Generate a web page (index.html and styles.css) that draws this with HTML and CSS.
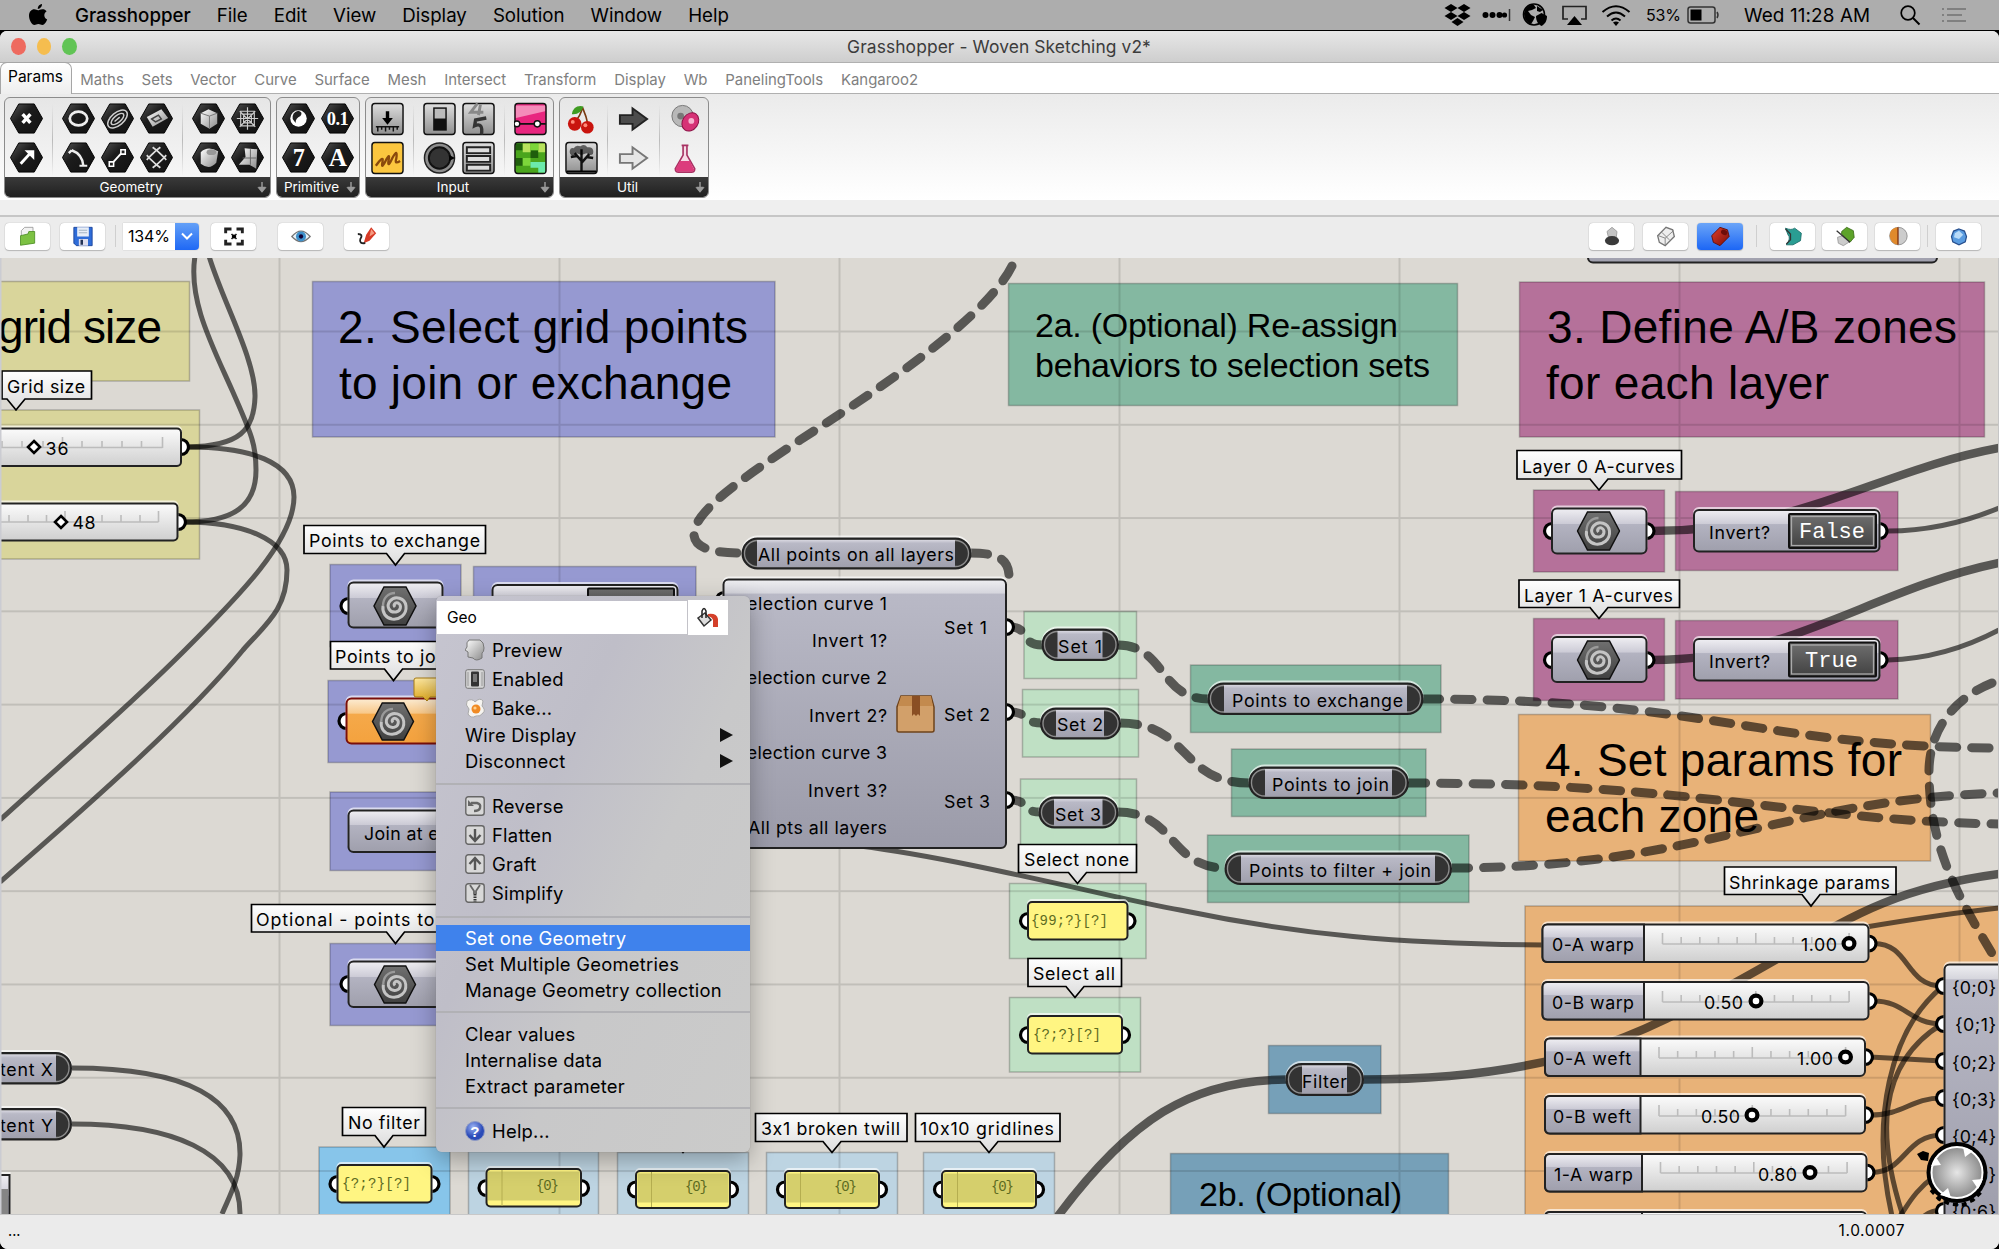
FILE: index.html
```html
<!DOCTYPE html>
<html lang="en">
<head>
<meta charset="utf-8">
<title>Grasshopper - Woven Sketching v2*</title>
<link rel="stylesheet" href="styles.css">
</head>
<body>
<svg class="defs" width="0" height="0" aria-hidden="true">
  <defs>
    <linearGradient id="gHex" x1="0" y1="0" x2="1" y2="1"><stop offset="0" stop-color="#555"/><stop offset=".4" stop-color="#1c1c1c"/><stop offset="1" stop-color="#111"/></linearGradient>
    <linearGradient id="gSquare" x1="0" y1="0" x2="0" y2="1"><stop offset="0" stop-color="#dedede"/><stop offset="1" stop-color="#8f8f8f"/></linearGradient>
    <linearGradient id="gSolid" x1="0" y1="0" x2="1" y2="1"><stop offset="0" stop-color="#fff"/><stop offset="1" stop-color="#8a8a8a"/></linearGradient>
    <linearGradient id="gNode" x1="0" y1="0" x2="0" y2="1"><stop offset="0" stop-color="#f0eff3"/><stop offset=".34" stop-color="#cccbd6"/><stop offset=".35" stop-color="#b3b3c1"/><stop offset="1" stop-color="#9f9fac"/></linearGradient>
    <linearGradient id="gRelay" x1="0" y1="0" x2="0" y2="1"><stop offset="0" stop-color="#d8d7e0"/><stop offset=".12" stop-color="#b9b9c6"/><stop offset="1" stop-color="#a0a0ad"/></linearGradient>
    <linearGradient id="gComponent" x1="0" y1="0" x2="0" y2="1"><stop offset="0" stop-color="#efeff2"/><stop offset=".05" stop-color="#d6d6dd"/><stop offset=".055" stop-color="#b9b9c6"/><stop offset="1" stop-color="#9b9ba9"/></linearGradient>
    <linearGradient id="gOrange" x1="0" y1="0" x2="0" y2="1"><stop offset="0" stop-color="#fcecd4"/><stop offset=".33" stop-color="#f8c888"/><stop offset=".34" stop-color="#f5a94a"/><stop offset="1" stop-color="#f4a23e"/></linearGradient>
    <linearGradient id="gTrack" x1="0" y1="0" x2="0" y2="1"><stop offset="0" stop-color="#fbfbfb"/><stop offset="1" stop-color="#cfcfcf"/></linearGradient>
    <linearGradient id="gTag" x1="0" y1="0" x2="0" y2="1"><stop offset="0" stop-color="#fff"/><stop offset="1" stop-color="#dcdcdc"/></linearGradient>
    <linearGradient id="gDark" x1="0" y1="0" x2="0" y2="1"><stop offset="0" stop-color="#707070"/><stop offset="1" stop-color="#404040"/></linearGradient>
    <linearGradient id="gBubble" x1="0" y1="0" x2="0" y2="1"><stop offset="0" stop-color="#ffe9a0"/><stop offset="1" stop-color="#e0aa20"/></linearGradient>
    <linearGradient id="gRed" x1="0" y1="0" x2="1" y2="1"><stop offset="0" stop-color="#e0402c"/><stop offset="1" stop-color="#7c0c08"/></linearGradient>
    <radialGradient id="gCompass"><stop offset="0" stop-color="#e6e6e6"/><stop offset="1" stop-color="#8c8c8c"/></radialGradient>
    <radialGradient id="gHelp" cx=".4" cy=".3"><stop offset="0" stop-color="#9db4f4"/><stop offset="1" stop-color="#2b4bb8"/></radialGradient>
    <pattern id="grid" x="278.500" y="330.500" width="280" height="93.280" patternUnits="userSpaceOnUse">
      <path d="M1 0V94M0 1H280" stroke="#000" stroke-opacity=".12" stroke-width="2"/>
    </pattern>
    <symbol id="hex" viewBox="0 0 34 34"><path d="M9 1.500H25L33.500 16.500L25 31.500H9L.5 16.500Z" fill="url(#gHex)" stroke="#000" stroke-width="1"/></symbol>
    <symbol id="spiral" viewBox="0 0 44 40">
      <path d="M11 1H33L43 20L33 39H11L1 20Z" fill="url(#gDark)" stroke="#111" stroke-width="1.500"/>
      <path d="M22 21C20 19 22 16 25 17C29 19 28 25 23 26C16 27 13 20 17 15C22 9 32 12 33 20C34 29 26 34 19 33C13 32 9 27 10 20" fill="none" stroke="#c4c4c4" stroke-width="3"/>
      <path d="M10 20C10 12 15 7 22 7" fill="none" stroke="#9a9a9a" stroke-width="2.400"/>
    </symbol>
    <symbol id="ticks" viewBox="0 0 190 14" overflow="visible">
      <path d="M0 13H186.600M0 2V13M18.660 6V13M37.320 6V13M55.980 6V13M74.640 6V13M93.300 2V13M111.960 6V13M130.620 6V13M149.280 6V13M167.940 6V13M186.600 2V13" fill="none" stroke="#bcbcbc" stroke-width="1.600"/>
    </symbol>
  </defs>
</svg>

<header class="menubar">
  <svg class="apple" width="20" height="24" viewBox="0 0 20 24"><path d="M14 1C14.200 3.500 12 6 9.800 5.900C9.500 3.500 11.800 1.200 14 1ZM10 7.300C11 7.300 12.500 6 14.800 6.200C16 6.200 17.700 6.800 18.600 8.300C15.200 10.500 15.800 15.200 19.200 16.500C18.400 18.700 16.500 22 14.400 22C12.800 22 12.300 21 10.400 21C8.400 21 8 22 6.400 22C4 22 1 16.800 1 12.700C1 8.500 3.700 6.300 6.200 6.300C7.900 6.300 9.200 7.300 10 7.300Z"/></svg>
  <nav class="menus"><b>Grasshopper</b><span>File</span><span>Edit</span><span>View</span><span>Display</span><span>Solution</span><span>Window</span><span>Help</span></nav>
  <div class="tray">
    <svg width="27" height="24" viewBox="0 0 27 24"><path d="M7 1L13.500 5L7 9L.5 5ZM20 1L26.500 5L20 9L13.500 5ZM7 9L13.500 13L7 17L.5 13ZM20 9L26.500 13L20 17L13.500 13ZM13.500 15L19.500 19L13.500 23L7.500 19Z"/></svg>
    <svg class="t-dots" width="29" height="14" viewBox="0 0 29 14"><circle cx="3.500" cy="7" r="3"/><circle cx="10.500" cy="7" r="3"/><circle cx="17.500" cy="7" r="3"/><circle cx="22.500" cy="7" r="2.600"/><path d="M27.500 1V13" stroke="#333" stroke-width="1.500"/></svg>
    <svg class="t-globe" width="26" height="24" viewBox="0 0 26 24"><circle cx="12" cy="11.500" r="10.500" fill="none" stroke="#000" stroke-width="1.600"/><path d="M2 10C4 3 9 1 12 2L14 5L10 7L6 8L9 12L13 14L11 18L9 21C4 19 2 15 2 10ZM15 3L21 7L18 9L15 8Z"/><path d="M19.500 10L25 13C25 18 23 21 19.500 23C16 21 14 18 14 13Z"/></svg>
    <svg class="t-airplay" width="27" height="21" viewBox="0 0 27 21"><path d="M7 14H2V1.500H25V14H20" fill="none" stroke="#222" stroke-width="1.700"/><path d="M13.500 11L21 20H6Z"/></svg>
    <svg class="t-wifi" width="30" height="21" viewBox="0 0 30 21"><g fill="none" stroke="#000" stroke-width="2"><path d="M1.500 7Q15-4.500 28.500 7M6 11.500Q15 3.500 24 11.500M10.500 15.500Q15 11.500 19.500 15.500"/></g><path d="M12 17.500Q15 15.500 18 17.500L15 21Z"/></svg>
    <span class="pct">53%</span>
    <svg class="t-batt" width="33" height="18" viewBox="0 0 33 18"><rect x="1" y="1" width="27" height="16" rx="2.500" fill="none" stroke="#333" stroke-width="1.500"/><rect x="3.500" y="3.500" width="11" height="11"/><path d="M30 6Q32 9 30 12" stroke="#333" stroke-width="1.500" fill="none"/></svg>
    <span class="clock">Wed 11:28 AM</span>
    <svg class="t-find" width="21" height="21" viewBox="0 0 21 21"><circle cx="8" cy="8" r="6.800" fill="none" stroke="#000" stroke-width="1.700"/><path d="M13 13L19.500 19.500" stroke="#000" stroke-width="2"/></svg>
    <svg class="t-list" width="26" height="16" viewBox="0 0 26 16"><path d="M1 2H3M6 2H25M1 8H3M6 8H21M1 14H3M6 14H25" stroke="#808080" stroke-width="2.200"/></svg>
  </div>
</header>

<main class="window">
  <div class="titlebar"><div class="lights"><i></i><i></i><i></i></div><h1>Grasshopper - Woven Sketching v2*</h1></div>
  <nav class="tabs"><span class="active">Params</span><span>Maths</span><span>Sets</span><span>Vector</span><span>Curve</span><span>Surface</span><span>Mesh</span><span>Intersect</span><span>Transform</span><span>Display</span><span>Wb</span><span>PanelingTools</span><span>Kangaroo2</span></nav>

  <section class="ribbon">
    <div class="panel p-geo">
      <div class="tools">
        <div class="cols c1">
          <svg viewBox="0 0 34 34"><use href="#hex"/><path d="M13 12L21 21M21 12L13 21" stroke="#fff" stroke-width="3.500"/></svg>
          <svg viewBox="0 0 34 34"><use href="#hex"/><path d="M11 23L20 13" stroke="#fff" stroke-width="3"/><path d="M15 9H25V19Z" fill="#fff"/></svg>
        </div><hr>
        <div class="cols c3">
          <svg viewBox="0 0 34 34"><use href="#hex"/><ellipse cx="17" cy="16.500" rx="9" ry="7" fill="none" stroke="#eee" stroke-width="2.800"/></svg>
          <svg viewBox="0 0 34 34"><use href="#hex"/><g fill="none" stroke="#ccc" stroke-width="1.500" transform="rotate(-40 17 17)"><ellipse cx="17" cy="17" rx="12" ry="6.500"/><ellipse cx="17" cy="17" rx="8" ry="3.500"/><path d="M13 17H20"/></g></svg>
          <svg viewBox="0 0 34 34"><use href="#hex"/><path d="M7 15L22 7L29 16L13 25Z" fill="url(#gSolid)"/><path d="M12 17L19 13L22 17L16 20Z" fill="none" stroke="#444" stroke-width="1.500"/></svg>
          <svg viewBox="0 0 34 34"><use href="#hex"/><path d="M10 9Q21 13 22 25M10 9L7 12" fill="none" stroke="#eee" stroke-width="2.500"/><path d="M18 25H26" stroke="#eee" stroke-width="2"/></svg>
          <svg viewBox="0 0 34 34"><use href="#hex"/><path d="M11 23L22 11" stroke="#fff" stroke-width="2"/><path d="M8.500 21H13V25.500H8.500ZM20.500 8.500H25V13H20.500Z" fill="#222" stroke="#fff" stroke-width="1.600"/></svg>
          <svg viewBox="0 0 34 34"><use href="#hex"/><path d="M17 9L25 16.500L17 24L9 16.500ZM13 6L17 9L21 6M7 14L9 16.500L7 19M27 14L25 16.500L27 19M13 27L17 24L21 27" fill="none" stroke="#ddd" stroke-width="1.800"/></svg>
        </div><hr>
        <div class="cols c2">
          <svg viewBox="0 0 34 34"><use href="#hex"/><path d="M9 11L17 7L26 11V22L18 27L9 22Z" fill="url(#gSolid)"/><path d="M9 11L18 14L26 11M18 14V27" fill="none" stroke="#777"/></svg>
          <svg viewBox="0 0 34 34"><use href="#hex"/><path d="M10 9H24V24H10ZM17 5V28M6 16.500H28M9 9L25 25M25 9L9 25M13 12H21V21H13Z" fill="none" stroke="#ccc" stroke-width="1.200"/></svg>
          <svg viewBox="0 0 34 34"><use href="#hex"/><path d="M9 11Q16 4 27 10L25 22Q18 30 9 23Z" fill="url(#gSolid)"/><ellipse cx="20" cy="11" rx="5" ry="3" fill="#999"/></svg>
          <svg viewBox="0 0 34 34"><use href="#hex"/><path d="M14 7L27 8L26 28L19 24L8 24L15 16Z" fill="url(#gSolid)"/><path d="M20 8V24M12 17L26 17" stroke="#666"/></svg>
        </div>
      </div>
      <footer><span>Geometry</span><svg class="pin" viewBox="0 0 10 12"><path d="M5 1V10M2 7L5 10.500L8 7ZM1.500 6.500H8.500" fill="#999" stroke="#999" stroke-width="1.500"/></svg></footer>
    </div>
    <div class="panel p-prim">
      <div class="tools"><div class="cols c2">
        <svg viewBox="0 0 34 34"><use href="#hex"/><circle cx="17" cy="16.500" r="8.500" fill="#fff"/><path d="M11 17Q10 10 17 8.500Q22 10 19 14Q14 16 14 21Z" fill="#222"/></svg>
        <svg viewBox="0 0 34 34"><use href="#hex"/><text class="glyph" x="17" y="23" font-size="19">0.1</text></svg>
        <svg viewBox="0 0 34 34"><use href="#hex"/><text class="glyph" x="17" y="25" font-size="25">7</text></svg>
        <svg viewBox="0 0 34 34"><use href="#hex"/><text class="glyph" x="17" y="25" font-size="26">A</text></svg>
      </div></div>
      <footer><span>Primitive</span><svg class="pin" viewBox="0 0 10 12"><path d="M5 1V10M2 7L5 10.500L8 7ZM1.500 6.500H8.500" fill="#999" stroke="#999" stroke-width="1.500"/></svg></footer>
    </div>
    <div class="panel p-input">
      <div class="tools">
        <div class="cols c1">
          <svg viewBox="0 0 34 34"><rect class="sq" x="1" y="1" width="32" height="32" rx="3"/><path d="M17 9V17" stroke="#000" stroke-width="3.500"/><path d="M11.500 16H22.500L17 23Z"/><path d="M5 25H29M7 25V30M11 25V28M15 25V30M19 25V28M23 25V30M27 25V28" stroke="#111" stroke-width="1.500"/></svg>
          <svg viewBox="0 0 34 34"><rect x="1" y="1" width="32" height="32" rx="3" fill="#fbc63f" stroke="#111" stroke-width="1.500"/><path d="M5 25Q13 14 12 20Q10 30 15 20Q20 10 18 20Q17 28 22 17Q28 6 26 18Q24 24 30 20" fill="none" stroke="#8a4a0c" stroke-width="2.400"/></svg>
        </div><hr>
        <div class="cols c2">
          <svg viewBox="0 0 34 34"><rect class="sq" x="1" y="1" width="32" height="32" rx="3"/><rect x="10.500" y="5" width="14" height="24" fill="#111"/><rect x="12" y="6.500" width="11" height="10" fill="#bbb"/></svg>
          <svg viewBox="0 0 34 34"><rect class="sq" x="1" y="1" width="32" height="32" rx="3"/><path d="M16 1L9 10H22M19 2L17 13" fill="none" stroke="#888" stroke-width="3"/><path d="M25 16L14 18L13 24Q22 20 20 33" fill="none" stroke="#333" stroke-width="3.500"/></svg>
          <svg viewBox="0 0 34 34"><circle cx="17" cy="17" r="15.500" fill="#8d8d8d" stroke="#222" stroke-width="1.500"/><circle cx="17" cy="17" r="11" fill="#333" stroke="#111" stroke-width="2"/><path d="M27 14L33 17L27 20Z"/></svg>
          <svg viewBox="0 0 34 34"><rect class="sq" x="1" y="1" width="32" height="32" rx="3"/><path d="M5 6H29V12H5ZM5 15H29V21H5ZM5 24H29V30H5Z" fill="#ddd" stroke="#222" stroke-width="2"/></svg>
        </div><hr>
        <div class="cols c1">
          <svg viewBox="0 0 34 34"><rect x="1" y="1" width="32" height="32" rx="3" fill="#e8267f" stroke="#111" stroke-width="1.500"/><path d="M2 3H32V9L2 16Z" fill="#f48cba"/><path d="M2 22H33" stroke="#111" stroke-width="2"/><circle cx="3" cy="22" r="3" fill="#fff" stroke="#111" stroke-width="1.500"/><circle cx="24" cy="22" r="3.200" fill="#fff" stroke="#111" stroke-width="1.500"/></svg>
          <svg viewBox="0 0 34 34"><rect x="1" y="1" width="32" height="32" rx="3" fill="#4aa51c" stroke="#111" stroke-width="1.500"/><path d="M2 2H9V9H2ZM17 9H25V17H17ZM2 17H9V25H2Z" fill="#1f5e0c"/><path d="M9 2H17V11H9ZM25 2H32V11H25Z" fill="#b8e25c"/><path d="M17 2H25V9H17ZM9 17H17V25H9Z" fill="#7cd63a"/><path d="M17 21H32V32H25V27H17Z" fill="#6cebab"/></svg>
        </div>
      </div>
      <footer><span>Input</span><svg class="pin" viewBox="0 0 10 12"><path d="M5 1V10M2 7L5 10.500L8 7ZM1.500 6.500H8.500" fill="#999" stroke="#999" stroke-width="1.500"/></svg></footer>
    </div>
    <div class="panel p-util">
      <div class="tools">
        <div class="cols c1">
          <svg viewBox="0 0 34 34"><path d="M18 5Q16 14 10 20M18 5Q22 14 24 24" fill="none" stroke="#7a3b12" stroke-width="1.700"/><path d="M19 4Q9 2 7 12Q16 13 19 4Z" fill="#3f9b21"/><circle cx="10" cy="22" r="7" fill="#c9140e"/><circle cx="23" cy="25.500" r="6.500" fill="#c9140e"/><circle cx="8" cy="20" r="2" fill="#ff8a78"/><circle cx="21" cy="23.500" r="2" fill="#ff8a78"/></svg>
          <svg viewBox="0 0 34 34"><rect class="sq" x="1" y="1" width="32" height="32" rx="3"/><path d="M17 31V20L10 12M17 22L25 13M17 19V8M12 15L6 16M22 16L29 17" fill="none" stroke="#111" stroke-width="2.500"/><path d="M5 9Q6 6 9 7Q11 3 16 5Q20 2 23 6Q28 5 29 9Q30 14 26 14L22 12L17 14L12 12L8 15Q4 13 5 9Z" opacity=".55"/><path d="M2 30H32V32H2Z"/></svg>
        </div><hr>
        <div class="cols c1">
          <svg viewBox="0 0 34 34"><path d="M3 13H16V6L31 17L16 28V22H3Z" fill="#4c4c4c" stroke="#222" stroke-width="2"/></svg>
          <svg viewBox="0 0 34 34"><path d="M3 13H16V6L31 17L16 28V22H3Z" fill="#e6e6e6" stroke="#777" stroke-width="2"/></svg>
        </div><hr>
        <div class="cols c1">
          <svg viewBox="0 0 34 34"><ellipse cx="14" cy="14" rx="11" ry="11" fill="#b8b8b8" stroke="#777"/><circle cx="12" cy="14" r="3.500" fill="#777"/><ellipse cx="22" cy="20" rx="8" ry="10" transform="rotate(35 22 20)" fill="#d63276" stroke="#8c1044"/><circle cx="23" cy="19" r="3" fill="#f6b3cf"/></svg>
          <svg viewBox="0 0 34 34"><path d="M13 4H20M14.500 4V14L6.500 28Q6.500 31.500 10 31.500H23Q26.500 31.500 26.500 28L18.500 14V4" fill="#f7dbe6" stroke="#a83263" stroke-width="1.700"/><path d="M11.500 20H21.500L26 29Q25 31 23 31H10Q7 31 7 28Z" fill="#dc3c7c"/></svg>
        </div>
      </div>
      <footer><span>Util</span><svg class="pin" viewBox="0 0 10 12"><path d="M5 1V10M2 7L5 10.500L8 7ZM1.500 6.500H8.500" fill="#999" stroke="#999" stroke-width="1.500"/></svg></footer>
    </div>
  </section>

  <section class="toolbar">
    <button class="b-open"><svg viewBox="0 0 24 24"><path d="M4 5L8 1H18V12H4Z" fill="#f2f2f2" stroke="#999"/><path d="M3 11L12 9L13 6H20V20L3 22.500Z" fill="#7cc142" stroke="#4b8d22"/></svg></button>
    <button class="b-save"><svg viewBox="0 0 24 24"><path d="M1 1H23V23H4L1 20Z" fill="#2e6cd8" stroke="#173f94"/><path d="M5 1H19V12H5Z" fill="#e8eef8"/><path d="M7 4.500H17M7 7.500H17" stroke="#9ab"/><path d="M7 15H18V23H7Z" fill="#dde"/><path d="M9 16H12V22H9Z" fill="#235"/></svg></button>
    <hr>
    <div class="zoom"><span>134%</span><i><svg width="12" height="8" viewBox="0 0 12 8"><path d="M1 1.500L6 6.500L11 1.500" fill="none" stroke="#fff" stroke-width="2"/></svg></i></div>
    <button class="b-fit"><svg viewBox="0 0 24 24"><path d="M2 8V3H9M15 3H22V8M22 16V21H15M9 21H2V16" fill="none" stroke="#222" stroke-width="3.500"/><path d="M9 9L15 15M15 9L9 15" stroke="#222" stroke-width="2"/><circle cx="12" cy="12" r="2.500"/></svg></button>
    <button class="b-eye"><svg viewBox="0 0 24 24"><path d="M1 12Q12-1 23 12Q12 24 1 12Z" fill="#e8f2f8" stroke="#777" stroke-width="1.500"/><circle cx="12" cy="12" r="6" fill="#3d8fc9"/><circle cx="12" cy="12" r="2.600" fill="#103"/></svg></button>
    <button class="b-sketch"><svg viewBox="0 0 24 24"><path d="M8 20L11 10L17 1L23 8L15 17Z" fill="#d63a26"/><path d="M17 3L21 8L15 12Z" fill="#f59a80"/><path d="M1 9Q8 9 4 15Q2 21 10 20" fill="none" stroke="#222" stroke-width="2.200"/></svg></button>
    <div class="spacer"></div>
    <button class="r1"><svg viewBox="0 0 24 24"><path d="M6 6L12 1L18 6L17 14H8Z" fill="#c4c4c4" stroke="#999"/><ellipse cx="12" cy="17" rx="8.500" ry="5.500" fill="#3a3a3a"/></svg></button>
    <button class="r2"><svg viewBox="0 0 24 24"><path d="M2 11L12 1L20 4L22 12L11 23L4 19Z" fill="#eee" stroke="#777" stroke-width="1.600"/><path d="M3 11L11 14L11 22M11 14L21 5M7 7L16 16" fill="none" stroke="#777"/></svg></button>
    <button class="r3 on"><svg viewBox="0 0 24 24"><path d="M2 11L12 1L21 4L23 12L12 23L4 19Z" fill="url(#gRed)" stroke="#5a0a06"/><ellipse cx="17" cy="7" rx="4" ry="3" fill="#6d0d0a" transform="rotate(30 17 7)"/></svg></button>
    <hr>
    <button class="r4"><svg viewBox="0 0 24 24"><path d="M3 2Q10 5 14 2L22 8L21 17L12 22L4 22Q10 14 6 10Z" fill="#2a9d93" stroke="#176a66"/><path d="M3 3L9 9V16L4 21" fill="none" stroke="#333" stroke-width="1.500"/></svg></button>
    <button class="r5"><svg viewBox="0 0 24 24"><path d="M3 13L12 10L18 18L10 23L4 20Z" fill="#ccc" stroke="#999"/><path d="M8 6L14 1L22 5L23 13L18 19L8 9Z" fill="#5da32a" stroke="#3a6c17"/><path d="M2 5L18 19" stroke="#333" stroke-width="1.500"/></svg></button>
    <button class="r6"><svg viewBox="0 0 24 24"><ellipse cx="12.500" cy="11.500" rx="10.500" ry="10.500" fill="#ccc" stroke="#888"/><path d="M12 1Q2 2 2 11Q3 21 12 22Z" fill="#e08a2c"/><path d="M12 1V22" stroke="#7b2a0b" stroke-width="1.500"/></svg></button>
    <hr class="h2">
    <button class="r7"><svg viewBox="0 0 24 24"><path d="M12 3L18.500 5.500L21 12L19.500 18.500L12 22L4.500 18.500L3 12L5.500 5.500Z" fill="#5a9ce0" stroke="#28508e" stroke-width="1.500"/><path d="M7 8L12 5L17 10L12 15L6 13Z" fill="#b9dbf8"/></svg></button>
  </section>

  <section class="canvas">
    <svg width="1999" height="956" viewBox="0 258 1999 956">
      <rect x="0" y="258" width="1999" height="956" fill="#dcd9d3"/>

      <g class="group">
        <g fill="#d9d59b"><rect x="-9" y="281.500" width="198.500" height="99.500"/><rect x="-9" y="410" width="208.500" height="149"/></g>
        <g fill="#9699d1"><rect x="312.500" y="281.500" width="462.500" height="155.500"/><rect x="330" y="564.500" width="131" height="82"/><rect x="473.500" y="566.500" width="222.500" height="79"/><rect x="328" y="680.500" width="131" height="82"/><rect x="330" y="792" width="131" height="78.500"/><rect x="330" y="943.500" width="131" height="82"/></g>
        <g fill="#84b8a1"><rect x="1008.500" y="283.500" width="449" height="122"/><rect x="1190.500" y="665" width="250.500" height="67.500"/><rect x="1231.500" y="749" width="194.500" height="67.500"/><rect x="1207.500" y="835" width="261.500" height="67.500"/></g>
        <g fill="#b5719a"><rect x="1519.500" y="282" width="465" height="155"/><rect x="1533.500" y="490" width="131" height="82"/><rect x="1675.500" y="491.500" width="222.500" height="79"/><rect x="1533.500" y="618.500" width="131" height="82"/><rect x="1675.500" y="620.500" width="222.500" height="78.500"/></g>
        <g fill="#e8b278"><rect x="1518.500" y="714.500" width="412" height="146.500"/><rect x="1525" y="906" width="490" height="330"/></g>
        <g fill="#bfe0c4"><rect x="1024" y="611.500" width="112.500" height="67"/><rect x="1022.500" y="689.500" width="116" height="67.500"/><rect x="1020.500" y="779" width="116" height="67.500"/><rect x="1009.500" y="883.500" width="136.500" height="75"/><rect x="1009.500" y="997.500" width="131" height="74.500"/></g>
        <rect x="319" y="1147" width="131" height="80" fill="#87c5ea"/>
        <g fill="#bdd4e2"><rect x="468.500" y="1151.500" width="130" height="80"/><rect x="617.500" y="1152.500" width="131" height="80"/><rect x="766.500" y="1152.500" width="131" height="80"/><rect x="923.500" y="1152.500" width="131" height="80"/></g>
        <g fill="#76a0b8"><rect x="1268.500" y="1045.500" width="112.500" height="68"/><rect x="1170.500" y="1153.500" width="278" height="80"/></g>
      </g>
      <rect x="0" y="258" width="1999" height="956" fill="url(#grid)"/>

      <g class="head">
        <text x="-2" y="343" textLength="164">grid size</text>
        <text x="338" y="343" textLength="410">2. Select grid points</text>
        <text x="339" y="399" textLength="393">to join or exchange</text>
        <text x="1547" y="343" textLength="410">3. Define A/B zones</text>
        <text x="1546" y="399" textLength="283">for each layer</text>
        <text x="1545" y="776" textLength="357">4. Set params for</text>
        <text x="1545" y="832" textLength="214">each zone</text>
      </g>
      <g class="subhead">
        <text x="1035" y="336.500" textLength="363">2a. (Optional) Re-assign</text>
        <text x="1035" y="377" textLength="395">behaviors to selection sets</text>
        <text x="1199" y="1206" textLength="203">2b. (Optional)</text>
      </g>

      <g class="wire">
        <path d="M209 256C222 300 256 360 255 397C254 430 240 446 188 447"/>
        <path d="M195 256C188 300 212 345 232 390S256 445 256 470C256 505 235 522 184 522"/>
        <path d="M188 447C250 447 294 462 294 497C294 540 240 595 185 650C120 715 60 765 0 820"/>
        <path d="M184 522C245 522 287 540 287 570C287 610 265 625 243 650C190 715 100 795 0 882"/>
        <path d="M72 1068C190 1068 241 1100 240 1155C239 1180 230 1195 222 1214"/>
        <path d="M72 1124C170 1124 241 1150 240 1215"/>
        <path d="M860 846C970 860 1120 900 1180 910C1300 935 1400 944 1545 945"/>
        <path d="M1888 531C1930 531 1970 520 1999 508"/><path d="M1888 660C1930 659 1965 648 1999 630"/>
        <path d="M1860 928C1920 918 1960 912 1999 908"/>
        <path d="M1874 943.500C1910 943.500 1905 986 1942 986"/><path d="M1874 1001C1905 1001 1910 1024 1942 1024"/><path d="M1870 1057L1942 1061"/><path d="M1870 1115C1905 1115 1910 1098 1942 1098"/><path d="M1872 1172.500C1905 1172.500 1905 1135 1942 1135"/>
        <path d="M1942 987C1890 1030 1870 1120 1892 1216"/><path d="M1942 1024C1875 1065 1878 1140 1903 1216"/><path d="M1935 1176C1915 1190 1908 1205 1900 1216"/><path d="M1942 1210Q1930 1210 1922 1218"/>
      </g>
      <g class="wire thick">
        <path d="M1652 531C1800 531 1880 470 1999 448"/><path d="M1652 660C1790 660 1870 590 1999 563"/>
        <path d="M1058 1216C1130 1120 1190 1080 1286 1079.500"/>
        <path d="M1363 1079.500C1560 1079 1640 1035 1740 980C1840 925 1880 890 1999 874"/>
      </g>
      <g class="wire dash">
        <path d="M1012 266C985 320 870 395 800 440C740 480 693 512 694 535C695 548 712 553 742 553"/>
        <path d="M970 553C1000 553 1010 560 1009 580"/>
        <path d="M1010 627C1030 627 1020 645 1042 645" stroke-dashoffset="6"/><path d="M1010 712C1030 712 1020 723 1042 723" stroke-dashoffset="6"/><path d="M1010 800C1030 800 1020 812 1040 812" stroke-dashoffset="6"/>
        <path d="M1118 645C1165 645 1160 699 1208 699"/><path d="M1120 723C1190 723 1180 783 1249 783"/><path d="M1118 812C1175 812 1170 868 1225 868"/>
        <path d="M1422 699C1710 699 1760 747 1999 748"/><path d="M1408 783C1700 783 1790 820 1999 824"/><path d="M1451 868C1700 868 1780 800 1999 793"/>
        <path d="M1992 683C1945 702 1928 740 1929 775C1930 850 1960 900 1996 960"/>
      </g>

      <!-- ports sit under the nodes so only the outer half shows -->
      <g class="port">
        <circle cx="181" cy="447" r="7.500"/><circle cx="178" cy="522" r="7.500"/>
        <circle cx="348.500" cy="606" r="7.500"/><circle cx="346.500" cy="721" r="7.500"/><circle cx="348.500" cy="984" r="7.500"/>
        <circle cx="1552" cy="531" r="7.500"/><circle cx="1646.500" cy="531" r="7.500"/><circle cx="1552" cy="660" r="7.500"/><circle cx="1646.500" cy="660" r="7.500"/>
        <circle cx="1879.500" cy="531" r="7.500"/><circle cx="1879.500" cy="660" r="7.500"/>
        <circle cx="1006" cy="627" r="7.500"/><circle cx="1006" cy="712" r="7.500"/><circle cx="1006" cy="800" r="7.500"/><circle cx="724" cy="600" r="7.500"/>
        <circle cx="1028" cy="921" r="7.500"/><circle cx="1127.500" cy="921" r="7.500"/><circle cx="1028" cy="1035" r="7.500"/><circle cx="1122" cy="1035" r="7.500"/>
        <circle cx="337.500" cy="1184" r="7.500"/><circle cx="431.500" cy="1184" r="7.500"/>
        <circle cx="486.500" cy="1188" r="7.500"/><circle cx="581" cy="1188" r="7.500"/><circle cx="636" cy="1189.500" r="7.500"/><circle cx="730" cy="1189.500" r="7.500"/><circle cx="785" cy="1189.500" r="7.500"/><circle cx="879" cy="1189.500" r="7.500"/><circle cx="942" cy="1189.500" r="7.500"/><circle cx="1036" cy="1189.500" r="7.500"/>
        <circle cx="1868.500" cy="943.500" r="7.500"/><circle cx="1868.500" cy="1001" r="7.500"/><circle cx="1865" cy="1057" r="7.500"/><circle cx="1865" cy="1115" r="7.500"/><circle cx="1866.500" cy="1172.500" r="7.500"/>
        <circle cx="1944" cy="986" r="7.500"/><circle cx="1944" cy="1024" r="7.500"/><circle cx="1944" cy="1061" r="7.500"/><circle cx="1944" cy="1098" r="7.500"/><circle cx="1944" cy="1135" r="7.500"/><circle cx="1944" cy="1211" r="7.500"/>
      </g>

      <!-- geometry params and toggles -->
      <g class="node">
        <rect x="348.500" y="582.500" width="94" height="45" rx="5"/><rect x="348.500" y="810.500" width="120" height="41.500" rx="5"/><rect x="348.500" y="961.500" width="94" height="45.500" rx="5"/>
        <rect x="492.500" y="585" width="185" height="41.500" rx="5"/>
        <rect x="1552" y="508.500" width="94.500" height="45" rx="5"/><rect x="1552" y="637" width="94.500" height="45" rx="5"/>
        <rect x="1694" y="510" width="185.500" height="41.500" rx="5"/><rect x="1694" y="639" width="185.500" height="41.500" rx="5"/>
        <rect x="1588" y="230" width="349" height="32.500" rx="5"/>
        <rect x="-20" y="1175" width="29.500" height="60"/>
      </g>
      <path d="M0 1189H8V1214H0Z" fill="#858585"/>
      <rect class="orange" x="346.500" y="698.500" width="94" height="45" rx="5"/>
      <path d="M416 678H440V697H430L427 701L423 697H416Q414 697 414 695V680Q414 678 416 678Z" fill="url(#gBubble)" stroke="#a87c14"/>
      <use href="#spiral" x="373" y="586" width="44" height="40"/><use href="#spiral" x="371" y="702" width="44" height="39"/><use href="#spiral" x="373" y="965" width="44" height="39"/>
      <use href="#spiral" x="1576.500" y="511" width="44" height="40"/><use href="#spiral" x="1576.500" y="640" width="44" height="40"/>
      <g class="screen"><rect x="588" y="588.500" width="86" height="30" rx="1"/><rect x="1789" y="514" width="87" height="34" rx="1"/><rect x="1789" y="642.500" width="87" height="34" rx="1"/></g>
      <g class="inner"><rect x="1791.500" y="516.500" width="82" height="29"/><rect x="1791.500" y="645" width="82" height="29"/></g>
      <g class="mono"><text x="1799" y="538" textLength="66">False</text><text x="1805" y="667" textLength="53">True</text></g>
      <g class="lbl"><text x="1709" y="539" textLength="61">Invert?</text><text x="1709" y="668" textLength="61">Invert?</text><text x="364" y="840" textLength="116">Join at ends?</text></g>

      <!-- cluster -->
      <rect class="component" x="723.500" y="579.500" width="282.500" height="268.500" rx="5"/>
      <g class="lbl end">
        <text x="887" y="610" textLength="152">Selection curve 1</text><text x="887" y="647" textLength="75">Invert 1?</text><text x="887" y="684" textLength="152">Selection curve 2</text><text x="887" y="721.500" textLength="78">Invert 2?</text><text x="887" y="759" textLength="152">Selection curve 3</text><text x="887" y="796.500" textLength="79">Invert 3?</text><text x="887" y="833.500" textLength="139">All pts all layers</text>
      </g>
      <g class="lbl"><text x="944" y="634" textLength="43">Set 1</text><text x="944" y="721" textLength="46">Set 2</text><text x="944" y="808" textLength="46">Set 3</text></g>
      <path d="M901 696H931L934 707V730Q934 732 932 732H899Q897 732 897 730V707Z" fill="#d2a06a" stroke="#6e431b" stroke-width="1.500"/><path d="M901 696H931L933 706H898Z" fill="#c38a4e"/><path d="M912 696H920V716L918 714L916 716L914 714L912 716Z" fill="#8a4f24"/>

      <!-- relays -->
      <g class="relay">
        <rect x="742.500" y="538.500" width="228" height="30" rx="15"/><rect x="1042.500" y="629.500" width="75.500" height="30.500" rx="15"/><rect x="1041" y="708.500" width="79" height="30" rx="15"/><rect x="1039.500" y="797.500" width="78" height="30" rx="15"/>
        <rect x="1208.500" y="683.500" width="214" height="30.500" rx="15"/><rect x="1249.500" y="767.500" width="158.500" height="30.500" rx="15"/><rect x="1225.500" y="853.500" width="225.500" height="30.500" rx="15"/><rect x="1286.500" y="1064" width="76.500" height="31" rx="15"/>
        <rect x="-30" y="1053" width="101" height="30.500" rx="15"/><rect x="-30" y="1109" width="101" height="30.500" rx="15"/>
      </g>
      <g class="relay-ring">
        <rect x="744.500" y="540.500" width="224" height="26" rx="13"/><rect x="1044.500" y="631.500" width="71.500" height="26.500" rx="13"/><rect x="1043" y="710.500" width="75" height="26" rx="13"/><rect x="1041.500" y="799.500" width="74" height="26" rx="13"/>
        <rect x="1210.500" y="685.500" width="210" height="26.500" rx="13"/><rect x="1251.500" y="769.500" width="154.500" height="26.500" rx="13"/><rect x="1227.500" y="855.500" width="221.500" height="26.500" rx="13"/><rect x="1288.500" y="1066" width="72.500" height="27" rx="13"/>
        <rect x="-28" y="1055" width="97" height="26.500" rx="13"/><rect x="-28" y="1111" width="97" height="26.500" rx="13"/>
      </g>
      <g class="relay-body">
        <rect x="757" y="540" width="198" height="27"/><rect x="1057.500" y="631" width="45" height="27.500"/><rect x="1056" y="710" width="48" height="27"/><rect x="1054" y="799" width="48.500" height="27"/>
        <rect x="1224" y="685" width="183" height="27.500"/><rect x="1265" y="769" width="127" height="27.500"/><rect x="1241" y="855" width="194" height="27.500"/><rect x="1302" y="1065.500" width="45" height="28"/>
        <rect x="-5" y="1054.500" width="61" height="27.500"/><rect x="-5" y="1110.500" width="61" height="27.500"/>
      </g>
      <g class="lbl">
        <text x="758" y="561" textLength="196">All points on all layers</text>
        <text x="1058" y="653" textLength="44">Set 1</text><text x="1057" y="731" textLength="46">Set 2</text><text x="1055" y="820.500" textLength="46">Set 3</text>
        <text x="1232" y="707" textLength="171">Points to exchange</text><text x="1272" y="791" textLength="117">Points to join</text><text x="1249" y="876.500" textLength="182">Points to filter + join</text>
        <text x="1302" y="1087.500" textLength="45">Filter</text>
        <text x="0" y="1076" textLength="53">tent X</text><text x="0" y="1132" textLength="53">tent Y</text>
      </g>

      <!-- data matchers -->
      <g class="panel-y"><rect x="1028" y="902" width="99.500" height="37.500" rx="4"/><rect x="1028" y="1016" width="94" height="37.500" rx="4"/><rect x="337.500" y="1165" width="94" height="37.500" rx="4"/><rect x="486.500" y="1169" width="94.500" height="37.500" rx="4"/><rect x="636" y="1171" width="94" height="37" rx="4"/><rect x="785" y="1171" width="94" height="37" rx="4"/><rect x="942" y="1171" width="94" height="37" rx="4"/></g>
      <g fill="#d5cf6c"><rect x="488" y="1171.500" width="91.500" height="29"/><rect x="637.500" y="1173.500" width="91" height="29"/><rect x="786.500" y="1173.500" width="91" height="29"/><rect x="943.500" y="1173.500" width="91" height="29"/></g>
      <path d="M502 1170V1206M651.500 1172V1207M800.500 1172V1207M957.500 1172V1207" stroke="#b5ae50"/>
      <g class="code"><text x="1031" y="925" textLength="77">{99;?}[?]</text><text x="1033" y="1039" textLength="68">{?;?}[?]</text><text x="342" y="1188" textLength="69">{?;?}[?]</text><text x="536" y="1190" textLength="23">{0}</text><text x="685" y="1191" textLength="23">{0}</text><text x="834" y="1191" textLength="23">{0}</text><text x="991" y="1191" textLength="23">{0}</text></g>

      <!-- sliders -->
      <g class="track"><rect x="-10" y="428.500" width="191" height="37.500" rx="4"/><rect x="-10" y="503.500" width="187.500" height="37" rx="4"/>
        <rect x="1542.500" y="924.500" width="326" height="37.500" rx="5"/><rect x="1542.500" y="982" width="326" height="37.500" rx="5"/><rect x="1545" y="1038.500" width="320" height="37.500" rx="5"/><rect x="1545" y="1096" width="320" height="37.500" rx="5"/><rect x="1545" y="1154" width="321.500" height="37.500" rx="5"/><rect x="1545" y="1212" width="321.500" height="37" rx="5"/></g>
      <g class="cap"><path d="M1644 924.500H1547.500Q1542.500 924.500 1542.500 929.500V957Q1542.500 962 1547.500 962H1644Z"/><path d="M1644 982H1547.500Q1542.500 982 1542.500 987V1014.500Q1542.500 1019.500 1547.500 1019.500H1644Z"/><path d="M1640.500 1038.500H1550Q1545 1038.500 1545 1043.500V1071Q1545 1076 1550 1076H1640.500Z"/><path d="M1640.500 1096H1550Q1545 1096 1545 1101V1128.500Q1545 1133.500 1550 1133.500H1640.500Z"/><path d="M1642 1154H1550Q1545 1154 1545 1159V1186.500Q1545 1191.500 1550 1191.500H1642Z"/><path d="M1642 1212H1550Q1545 1212 1545 1217V1240H1642Z"/></g>
      <g fill="none" stroke="#bcbcbc" stroke-width="1.600"><path d="M0 447.500H162.500M2 441V448M22 441V448M43 441V448M62.500 437V448M82 441V448M102 441V448M122 441V448M141.500 441V448M162.500 437V448"/><path d="M0 522H158.500M9 515V522M28 515V522M46.500 515V522M65 511V522M102 515V522M121 515V522M140 515V522M158.500 511V522"/></g>
      <use href="#ticks" x="1662.500" y="931" width="190" height="14"/><use href="#ticks" x="1662.500" y="989" width="190" height="14"/><use href="#ticks" x="1659" y="1045" width="190" height="14"/><use href="#ticks" x="1659" y="1103" width="190" height="14"/><use href="#ticks" x="1660.500" y="1160" width="190" height="14"/>
      <g class="knob"><path d="M34 441L40 447L34 453L28 447Z"/><path d="M61 516L67 522L61 528L55 522Z"/></g>
      <g class="knob big"><circle cx="1849" cy="943.500" r="5.400"/><circle cx="1756" cy="1001" r="5.400"/><circle cx="1845.500" cy="1057" r="5.400"/><circle cx="1752" cy="1115" r="5.400"/><circle cx="1810" cy="1172.500" r="5.400"/></g>
      <g class="lbl">
        <text x="45.500" y="454.500" textLength="23">36</text><text x="72.500" y="529" textLength="23">48</text>
        <text x="1552" y="951" textLength="82">0-A warp</text><text x="1552" y="1008.500" textLength="82">0-B warp</text><text x="1553" y="1065" textLength="78">0-A weft</text><text x="1553" y="1122.500" textLength="78">0-B weft</text><text x="1554" y="1180.500" textLength="79">1-A warp</text>
        <text x="1801" y="951" textLength="36">1.00</text><text x="1704" y="1008.500" textLength="39">0.50</text><text x="1797" y="1065" textLength="36">1.00</text><text x="1701" y="1122.500" textLength="39">0.50</text><text x="1758" y="1180.500" textLength="39">0.80</text>
      </g>
      <rect class="component" x="1944.500" y="964.500" width="80" height="280" rx="5"/>
      <g class="lbl end"><text x="1996" y="994" textLength="44">{0;0}</text><text x="1996" y="1031" textLength="41">{0;1}</text><text x="1996" y="1068.500" textLength="44">{0;2}</text><text x="1996" y="1106" textLength="44">{0;3}</text><text x="1996" y="1143" textLength="44">{0;4}</text><text x="1996" y="1180.500" textLength="44">{0;5}</text><text x="1996" y="1217.500" textLength="44">{0;6}</text></g>

      <!-- tags -->
      <g class="tag">
        <path d="M2 371H91.500V399H25L16 410L7 399H2Z"/><path d="M304 525.500H485.500V553.500H404.500L395.500 565L386.500 553.500H304Z"/><path d="M330.500 641.500H460V669H402.500L393.500 680.500L384.500 669H330.500Z"/><path d="M251.500 904.500H500V932H404.500L395.500 943.500L386.500 932H251.500Z"/>
        <path d="M342.500 1107.500H425.500V1135.500H393L384 1147L375 1135.500H342.500Z"/><path d="M755.500 1113.500H907V1141.500H841L832 1152.500L823 1141.500H755.500Z"/><path d="M915.500 1113.500H1060V1141.500H998L989 1152.500L980 1141.500H915.500Z"/><path d="M600 1113.500H740V1141.500H692L683 1152.500L674 1141.500H600Z"/>
        <path d="M1517 450.500H1681.500V479H1608L1599 490L1590 479H1517Z"/><path d="M1519 580H1679.500V607.500H1608L1599 618.500L1590 607.500H1519Z"/><path d="M1724.500 867H1896V894.500H1820L1811 906L1802 894.500H1724.500Z"/>
        <path d="M1018.500 844.500H1136.500V872.500H1086.500L1077.500 883.500L1068.500 872.500H1018.500Z"/><path d="M1028 958.500H1121.500V986.500H1084L1075 997.500L1066 986.500H1028Z"/>
      </g>
      <g class="lbl">
        <text x="7" y="392.500" textLength="78">Grid size</text><text x="309" y="547" textLength="171">Points to exchange</text><text x="335" y="662.500" textLength="117">Points to join</text><text x="256" y="926" textLength="228">Optional - points to filter</text>
        <text x="348" y="1129" textLength="72">No filter</text><text x="761" y="1135" textLength="139">3x1 broken twill</text><text x="920" y="1135" textLength="134">10x10 gridlines</text>
        <text x="1522" y="472.500" textLength="153">Layer 0 A-curves</text><text x="1524" y="601.500" textLength="149">Layer 1 A-curves</text><text x="1729" y="888.500" textLength="161">Shrinkage params</text>
        <text x="1024" y="866" textLength="105">Select none</text><text x="1033" y="980" textLength="82">Select all</text>
      </g>

      <!-- canvas compass -->
      <circle cx="1957" cy="1172.500" r="30.500"/><path d="M1931 1190L1939 1199L1950 1204L1962 1205L1973 1200L1982 1191" fill="none" stroke="#000" stroke-width="3.500" stroke-dasharray="5 4"/>
      <path d="M1917 1154L1923 1151L1929 1153L1928 1161L1921 1160Z"/>
      <circle cx="1957" cy="1172.500" r="25.500" fill="url(#gCompass)" stroke="#fff" stroke-width="2"/>
      <path d="M1963 1147L1973 1151L1965 1157ZM1983 1179L1978 1189L1972 1180ZM1951 1198L1940 1195L1948 1188ZM1931 1166L1936 1157L1941 1165Z" fill="#fff"/>
      <path d="M.5 258V1214" stroke="#cbccd2" stroke-width="2"/><path d="M1998.500 258V1214" stroke="#c6c6c6"/>
    </svg>
  </section>
  <footer class="status"><span>...</span><span class="ver">1.0.0007</span></footer>
</main>

<aside class="context">
  <div class="name"><span>Geo</span><i><svg width="22" height="22" viewBox="0 0 22 22"><path d="M1 11L8 6L14 13L7 19Z" fill="#ddd" stroke="#333" stroke-width="1.500"/><path d="M5 11V4Q7-1 9 4V11" fill="none" stroke="#222" stroke-width="1.500"/><path d="M11 7Q20 6 21 12V20H16V13Q15 10 11 9Z" fill="#d4402a"/></svg></i></div>
  <div class="row tall"><svg viewBox="0 0 20 22"><path d="M4 1H15Q19 3 19 9Q19 13 17 14L17 19Q11 23 8 19L3 18V13L0 11L2 8Q1 3 4 1Z" fill="url(#gSolid)" stroke="#777"/></svg>Preview</div>
  <div class="row tall"><svg viewBox="0 0 20 22"><rect x=".7" y="1.700" width="18.600" height="18.600" rx="2" fill="#d5d5d5" stroke="#777"/><path d="M3 4V18M17 4V18" stroke="#999"/><rect x="6" y="3.500" width="8" height="15" rx="1" fill="#333"/><rect x="8" y="6" width="4" height="8" fill="#777"/></svg>Enabled</div>
  <div class="row tall"><svg viewBox="0 0 20 22"><path d="M2 4Q7 1 10 5Q15 0 18 4L17 9Q21 13 18 16Q15 20 11 19Q6 22 3 17L4 12Q0 8 2 4Z" fill="#f6f4f0" stroke="#aaa"/><circle cx="11" cy="12" r="4.500" fill="#f08a24"/><circle cx="10" cy="11" r="1.600" fill="#ffd08a"/></svg>Bake...</div>
  <div class="row">Wire Display<b></b></div>
  <div class="row">Disconnect<b></b></div>
  <hr>
  <div class="row tall"><svg viewBox="0 0 20 22"><rect class="ic" x=".8" y="1.800" width="18.400" height="18.400" rx="2.500"/><path d="M6 8H12Q16 9 15 13Q14 16 9 16" fill="none" stroke="#666" stroke-width="2.400"/><path d="M3 5V11L9 11Z" fill="#666"/></svg>Reverse</div>
  <div class="row tall"><svg viewBox="0 0 20 22"><rect class="ic" x=".8" y="1.800" width="18.400" height="18.400" rx="2.500"/><path d="M10 5V16M4.500 11L10 17L15.500 11" fill="none" stroke="#555" stroke-width="2.400"/></svg>Flatten</div>
  <div class="row tall"><svg viewBox="0 0 20 22"><rect class="ic" x=".8" y="1.800" width="18.400" height="18.400" rx="2.500"/><path d="M10 17V6M4.500 11L10 5L15.500 11" fill="none" stroke="#555" stroke-width="2.400"/></svg>Graft</div>
  <div class="row tall"><svg viewBox="0 0 20 22"><rect class="ic" x=".8" y="1.800" width="18.400" height="18.400" rx="2.500"/><path d="M5 3L9 9V12M15 3L11 9V12" fill="none" stroke="#666" stroke-width="1.800"/><path d="M10 12V20" stroke="#333" stroke-width="3" stroke-dasharray="1.500 1"/></svg>Simplify</div>
  <hr>
  <div class="row hot">Set one Geometry</div>
  <div class="row">Set Multiple Geometries</div>
  <div class="row">Manage Geometry collection</div>
  <hr>
  <div class="row">Clear values</div>
  <div class="row">Internalise data</div>
  <div class="row">Extract parameter</div>
  <hr>
  <div class="row tall"><svg viewBox="0 0 20 22"><circle cx="10" cy="11" r="9.500" fill="url(#gHelp)" stroke="#8f9bc4"/><text class="q" x="10" y="16.500">?</text></svg>Help...</div>
</aside>
</body>
</html>
```
FILE: styles.css
```css
* { box-sizing: border-box; }
body { margin: 0; width: 1999px; height: 1249px; overflow: hidden; background: #000; color: #000; font-family: Inter, "Liberation Sans", sans-serif; font-feature-settings: "calt" 0; display: flex; flex-direction: column; }
svg { display: block; flex: none; }
.defs { position: absolute; }
hr { border: 0; margin: 0; }

/* system menu bar */
.menubar { height: 31px; flex: none; background: #adadad; border-bottom: 1px solid #000; display: flex; align-items: center; padding: 0 32px 0 28px; font-size: 18.700px; white-space: nowrap; }
.menus { display: flex; gap: 26px; margin-left: 27px; }
.menus b { font-weight: 500; }
.tray { margin-left: auto; display: flex; align-items: center; }
.t-dots { margin-left: 11px; }
.t-globe { margin-left: 11px; }
.t-airplay { margin-left: 13px; }
.t-wifi { margin-left: 13px; }
.pct { margin-left: 15px; font-size: 16px; width: 35px; letter-spacing: -.2px; }
.t-batt { margin-left: 6px; }
.clock { margin-left: 24px; width: 128px; font-size: 18.900px; letter-spacing: .1px; }
.t-find { margin-left: 28px; }
.t-list { margin-left: 20px; }

/* window frame */
.window { flex: 1; display: flex; flex-direction: column; background: #fff; border-radius: 7px 7px 8px 8px; overflow: hidden; }
.titlebar { height: 32px; flex: none; background: linear-gradient(#e7e7e7, #cecece); border-bottom: 1px solid #b0b0b0; display: flex; align-items: center; padding-left: 11px; }
.lights { display: flex; gap: 11px; width: 66px; }
.lights i { width: 17px; height: 17px; border-radius: 50%; background: #ee6a5f; }
.lights i:nth-child(2) { background: #f5bd4f; }
.lights i:nth-child(3) { background: #61c455; }
.titlebar h1 { margin: 0 auto; transform: translateX(-39px); font-size: 17.400px; font-weight: 400; color: #3c3c3c; letter-spacing: .1px; }

.tabs { height: 31px; flex: none; display: flex; align-items: center; gap: 17.800px; font-size: 14.950px; color: #808080; padding-top: 3px; border-bottom: 1px solid #b0b0b0; }
.tabs .active { color: #000; font-size: 15.500px; width: 72px; height: 32px; margin: -3px -9.500px 0 0; padding: 4px 0 0 7px; background: linear-gradient(#fff, #eee); border: 1px solid #a6a6a6; border-bottom: 0; border-radius: 7px 7px 0 0; position: relative; top: 0; }

.ribbon { height: 106px; flex: none; background: linear-gradient(#ebebeb, #fff); display: flex; gap: 5px; padding: 3px 4px 0; }
.panel { height: 101px; border: 1.500px solid #8c8c8c; border-radius: 6px; background: linear-gradient(#e6e6e6, #fafafa); display: flex; flex-direction: column; overflow: hidden; }
.p-geo { width: 267px; }
.p-prim { width: 84px; }
.p-input { width: 189px; }
.p-util { width: 150px; }
.tools { flex: 1; display: flex; padding: 4px 0 0 4.500px; }
.tools hr { width: 1px; height: 72px; margin: 2px 9px 0; background: linear-gradient(transparent, #bbb, transparent); }
.cols { display: grid; gap: 5px 6px; grid-auto-rows: 34px; align-content: start; }
.cols svg { width: 33px; height: 34px; }
.c1 { grid-template-columns: 33px; }
.c2 { grid-template-columns: 33px 33px; }
.c3 { grid-template-columns: 33px 33px 33px; }
.sq { fill: url(#gSquare); stroke: #111; stroke-width: 1.500; }
.glyph { font-family: "Liberation Serif", serif; font-weight: 700; fill: #fff; text-anchor: middle; letter-spacing: -.5px; }
.panel footer { height: 20px; background: linear-gradient(#3a3a3a, #202020); color: #fff; font-size: 13.500px; display: flex; align-items: center; justify-content: center; }
.panel footer span { flex: 1; text-align: center; }
.pin { width: 10px; height: 12px; margin-right: 3px; }

/* canvas toolbar */
.toolbar { height: 58px; flex: none; background: #ececec; border-top: 15px solid #efefef; box-shadow: inset 0 2px 0 #c6c6c6; display: flex; align-items: center; padding: 0 18px 1px 5px; }
.toolbar button { width: 45px; height: 27px; border: 0; padding: 0; border-radius: 4px; background: #fff; box-shadow: 0 0 1px #999, 0 1px 1px #bbb; display: flex; align-items: center; justify-content: center; }
.toolbar button svg { width: 20px; height: 21px; }
.toolbar button.on { background: linear-gradient(#6ba5f8, #1c66f5); width: 46px; }
.toolbar hr { width: 1px; height: 22px; background: #cfcfcf; }
.b-save { margin-left: 10px; }
.b-save + hr { margin: 0 7px 0 10px; }
.zoom { display: flex; width: 76px; height: 27px; background: #fff; box-shadow: 0 0 1px #888; border-radius: 0 4px 4px 0; font-size: 16px; align-items: center; }
.zoom span { width: 52px; padding-left: 5px; letter-spacing: -.2px; }
.zoom i { width: 24px; height: 27px; background: linear-gradient(#63a0f7, #1f68f5); border-radius: 0 4px 4px 0; display: flex; align-items: center; justify-content: center; }
.b-fit { margin-left: 12px; }
.b-eye { margin-left: 22px; }
.b-sketch { margin-left: 21px; }
.spacer { flex: 1; }
.r2, .r3 { margin-left: 9px; }
.r3 + hr { margin: 0 13px 0 13px; }
.r5 { margin-left: 7px; }
.r6 { margin-left: 8px; }
.toolbar .h2 { margin: 0 8px 0 7px; }

/* node canvas */
.canvas { height: 956px; flex: none; }
.group rect { stroke: #000; stroke-opacity: .22; stroke-width: 1.500; }
.head, .subhead { font-family: "Liberation Sans", Arial, sans-serif; font-size: 46px; }
.subhead { font-size: 34px; }
.wire { fill: none; stroke: #000; stroke-opacity: .6; stroke-width: 5; }
.thick, .dash { stroke-width: 9; }
.thick { stroke-width: 8.500; }
.dash { stroke-linecap: round; stroke-dasharray: 17.500 15; }
.port { fill: #fff; stroke: #000; stroke-width: 3.200; }
.node rect, .orange, .component, .relay rect, .panel-y rect, .track rect { stroke: #222; stroke-width: 2; filter: drop-shadow(0 -2px .3px rgba(255, 255, 255, .65)); }
.node rect { fill: url(#gNode); }
.orange { fill: url(#gOrange); stroke: #7a0f0a !important; }
.component { fill: url(#gComponent); }
.track rect { fill: url(#gTrack); }
.cap path { fill: url(#gNode); stroke: #222; stroke-width: 2; }
.panel-y rect { fill: #fff582; }
.relay rect { fill: #333; }
.relay-ring rect { fill: none; stroke: #8d8d8d; stroke-width: 1.300; }
.relay-body rect { fill: url(#gRelay); }
.screen rect { fill: url(#gDark); stroke: #111; stroke-width: 2; }
.inner rect { fill: none; stroke: #aaa; stroke-width: 1.300; }
.lbl { font-size: 17.800px; }
.end { text-anchor: end; }
.mono { font: 22px "Liberation Mono", monospace; fill: #fff; }
.code { font: 14px "Liberation Mono", monospace; fill: #5d6b22; }
.knob { fill: #fff; stroke: #000; stroke-width: 2.600; }
.big { stroke-width: 4.200; }
.tag path { fill: url(#gTag); stroke: #000; stroke-width: 1.700; }

.status { flex: 1; background: #ebebeb; border-top: 1px solid #c8c8c8; display: flex; align-items: center; justify-content: space-between; font-size: 14.500px; padding: 0 94px 3px 8px; }
.ver { font-size: 15.500px; letter-spacing: .6px; }

/* context menu over the canvas */
.context { position: absolute; left: 436px; top: 596px; width: 314px; height: 556px; border-radius: 6px; background: linear-gradient(115deg, #c6c5d0 0%, #bfbec8 35%, #c8c8c9 60%, #cbcbca 100%); box-shadow: 0 0 1px #777, 0 8px 24px rgba(0, 0, 0, .3); font-size: 18.400px; white-space: nowrap; padding-top: 4px; }
.name { height: 35px; display: flex; align-items: center; gap: 1px; padding-left: 1px; }
.name span { width: 250px; height: 33px; background: #fff; font-size: 15.500px; line-height: 33px; padding-left: 10px; }
.name i { width: 40px; height: 35px; background: #fff; display: flex; align-items: center; justify-content: center; }
.row { height: 26.300px; padding-left: 29px; display: flex; align-items: center; letter-spacing: .25px; }
.row.tall { height: 29px; }
.row svg { width: 20px; height: 22px; margin-right: 7px; }
.row b { margin: 0 17px 0 auto; border: 7px solid transparent; border-left: 13px solid #111; border-right: 0; }
.hot { background: #3f82ec; color: #fff; }
.context hr { height: 17px; background: linear-gradient(transparent 8px, #b1b1b5 8px, #b1b1b5 10px, transparent 10px); }
.ic { fill: #d8d8d8; stroke: #666; stroke-width: 1.400; }
.q { font: 700 15px "Liberation Sans", sans-serif; fill: #fff; text-anchor: middle; }
```
